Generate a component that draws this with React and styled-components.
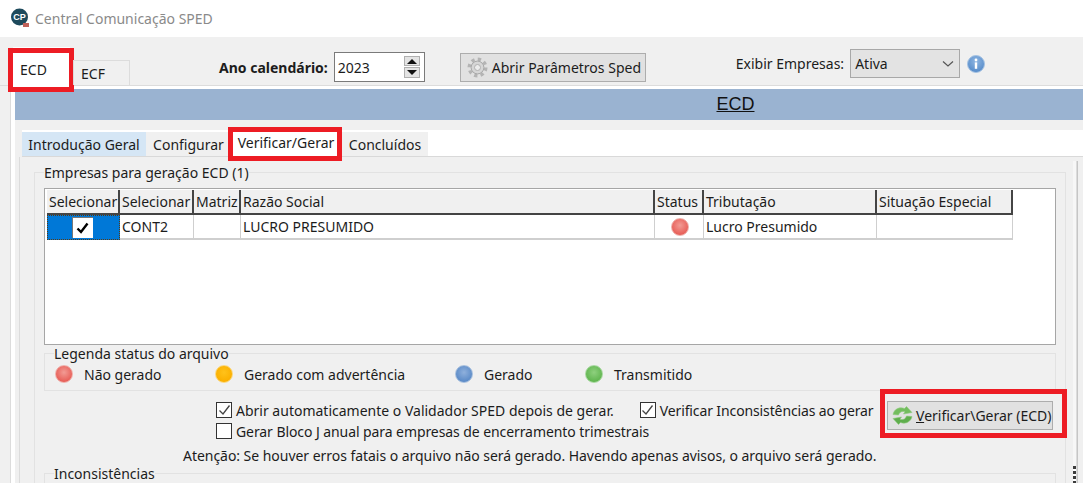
import React from 'react'
import styled, { createGlobalStyle } from 'styled-components'

const GlobalStyle = createGlobalStyle`
  html, body { margin: 0; padding: 0; background: #f0f0f0; }
  body { font-family: "Noto Sans", "Open Sans", sans-serif; font-size: 14px; color: #1c1c1c; }
  * { box-sizing: border-box; }
`

const Win = styled.div`
  width: 1083px;
  height: 483px;
  overflow: hidden;
  background: #f0f0f0;
`

const TitleBar = styled.div`
  height: 37px;
  background: #fff;
  display: flex;
  align-items: center;
  padding: 0 0 1px 10px;
  gap: 5px;
  color: #8a8a8a;
  font-size: 14px;
`

const TopBar = styled.div`
  height: 49px;
  display: flex;
  border-bottom: 1px solid #dcdcdc;
  padding-left: 13px;
`

const OuterTab = styled.div`
  position: relative;
  width: ${p => p.$w}px;
  height: ${p => p.$h}px;
  margin-top: ${p => p.$top}px;
  margin-left: ${p => p.$ml || 0}px;
  padding: ${p => p.$pt || 0}px 0 0 7px;
  background: ${p => (p.$active ? '#fff' : '#f0f0f0')};
  border: ${p => (p.$active ? 'none' : '1px solid #dcdcdc')};
  border-bottom: none;
  display: flex;
  align-items: center;
`

const RedBox = styled.span`
  position: absolute;
  left: ${p => p.$l}px;
  top: ${p => p.$t}px;
  width: ${p => p.$w}px;
  height: ${p => p.$h}px;
  border: 5px solid #ed1c24;
  pointer-events: none;
`

const Label = styled.span`
  font-weight: ${p => (p.$bold ? 700 : 400)};
  white-space: nowrap;
`

const AnoField = styled.div`
  display: flex;
  align-items: center;
  gap: 6px;
  margin-left: 89px;
  margin-top: 15px;
  height: 30px;
`

const Spin = styled.div`
  width: 91px;
  height: 30px;
  background: #fff;
  border: 1px solid #7a7a7a;
  display: flex;
  align-items: center;
  justify-content: space-between;
  padding: 0 4px 0 3px;
`

const SpinArrows = styled.div`
  display: flex;
  flex-direction: column;
  gap: 1px;
`

const SpinBtn = styled.div`
  width: 16px;
  height: ${p => (p.$down ? 11 : 10)}px;
  background: #e4e4e4;
  border: 1px solid #b0b0b0;
  display: flex;
  align-items: center;
  justify-content: center;
  &::before {
    content: '';
    border-left: 5px solid transparent;
    border-right: 5px solid transparent;
    ${p => (p.$down ? 'border-top: 5px solid #111;' : 'border-bottom: 5px solid #111;')}
  }
`

const ToolBtn = styled.div`
  position: relative;
  height: ${p => p.$h}px;
  width: ${p => p.$w}px;
  margin-left: ${p => p.$ml || 0}px;
  margin-top: ${p => p.$mt || 0}px;
  background: #e1e1e1;
  border: 1px solid #adadad;
  display: flex;
  align-items: center;
  gap: ${p => p.$gap}px;
  padding-left: ${p => p.$pl}px;
  white-space: nowrap;
`

const ExibirField = styled.div`
  display: flex;
  align-items: center;
  margin-left: 90px;
  margin-top: 12px;
  height: 29px;
`

const Select = styled.div`
  width: 110px;
  height: 29px;
  margin-left: 6px;
  background: #e3e3e3;
  border: 1px solid #a8a8a8;
  display: flex;
  align-items: center;
  justify-content: space-between;
  padding: 0 5px 0 4px;
`

const Shell = styled.div`
  height: 397px;
  margin-left: 10px;
  border-left: 1px solid #dcdcdc;
  padding-top: 3px;
  padding-left: 4px;
  background: #f0f0f0;
  box-shadow: inset 4px 3px 0 #fff;
`

const Header = styled.div`
  height: 31px;
  background: #9ab3d1;
  display: flex;
  align-items: center;
  justify-content: center;
  font-family: "Liberation Sans", sans-serif;
  font-size: 18px;
  color: #111;
  text-decoration: underline;
  padding-left: 373px;
`

const InnerTabs = styled.div`
  height: 37px;
  padding: 10px 0 0 7px;
  display: flex;
  align-items: flex-end;
`

const TabStrip = styled.div`
  height: 27px;
  flex: 1;
  display: flex;
  align-items: flex-end;
  background: #fff;
  border-bottom: 1px solid #d9d9d9;
`

const InnerTab = styled.div`
  position: relative;
  width: ${p => p.$w}px;
  height: ${p => (p.$active ? 27 : 24)}px;
  margin-left: ${p => p.$ml || 0}px;
  padding: ${p => (p.$active ? 4 : 0)}px 0 0 ${p => p.$pl || 0}px;
  background: ${p => p.$bg};
  display: flex;
  align-items: ${p => (p.$active ? 'flex-start' : 'center')};
  justify-content: center;
  white-space: nowrap;
`

const Panel = styled.div`
  display: flex;
  height: 326px;
  padding-left: 4px;
  overflow: hidden;
`

const PanelBody = styled.div`
  flex: 1;
  border-left: 1px solid #dcdcdc;
  padding: 8px 7px 0 14px;
`

const ScrollRail = styled.div`
  width: 10px;
  margin-top: 4px;
  background: linear-gradient(90deg, #f7f7f7 0 3px, #dcdcdc 3px 4px, #c6c6c6 4px 5px, #f0f0f0 5px);
  position: relative;
  &::after {
    content: '';
    position: absolute;
    left: 0;
    top: 305px;
    width: 3px;
    height: 17px;
    background: repeating-linear-gradient(180deg, #3c3c3c 0 3px, #fff 3px 5px);
  }
`

const Group = styled.fieldset`
  margin: ${p => p.$margin || 0};
  padding: ${p => p.$pad};
  height: ${p => p.$h}px;
  border: 1px solid #e2e2e2;
  min-width: 0;
  & > legend {
    padding: 0;
    margin-left: ${p => p.$lm}px;
    line-height: 15px;
    white-space: nowrap;
  }
`

const GridBox = styled.div`
  height: 157px;
  background: #fff;
  border: 1px solid #a6a6a6;
  padding: 1px 0 0 1px;
`

const Row = styled.div`
  display: grid;
  grid-template-columns: 73px 74px 47px 414px 49px 173px 136px;
  width: 966px;
  margin-left: 1px;
`

const HeadCell = styled.div`
  height: 25px;
  background: #f0f0f0;
  border-right: 2px solid #444;
  border-bottom: 2px solid #444;
  padding-left: 2px;
  display: flex;
  align-items: center;
  white-space: nowrap;
  overflow: hidden;
`

const Cell = styled.div`
  height: 25px;
  border-right: 1px solid #cfcfcf;
  border-bottom: 2px solid #cfcfcf;
  padding-left: 2px;
  display: flex;
  align-items: center;
  justify-content: ${p => (p.$center ? 'center' : 'flex-start')};
  white-space: nowrap;
`

const CheckCell = styled(Cell)`
  background: #0078d7;
  outline: 1px dotted #5a3a10;
  outline-offset: -1px;
  border: none;
  padding: 0 3px 0 0;
  justify-content: center;
`

const Tick = styled.div`
  width: 21px;
  height: 21px;
  background: #fff;
  border-top: 1px solid #777;
  border-left: 1px solid #777;
  display: flex;
  align-items: center;
  justify-content: center;
`

const Dot = styled.span`
  display: block;
  flex: none;
  width: 18px;
  height: 18px;
  border-radius: 50%;
  border: 1px solid ${p => p.$edge};
  background: radial-gradient(circle at 50% 40%, ${p => p.$light} 0%, ${p => p.$color} 70%);
`

const Legend = styled.div`
  display: flex;
  align-items: center;
  padding-left: 10px;
  height: 26px;
`

const LegendItem = styled.div`
  display: flex;
  align-items: center;
  gap: 11px;
  width: ${p => p.$w}px;
  white-space: nowrap;
`

const Options = styled.div`
  display: flex;
  padding: 0 0 0 172px;
  height: 53px;
`

const OptionRows = styled.div`
  width: 666px;
  padding-top: 11px;
  display: flex;
  flex-direction: column;
  gap: 5px;
`

const OptionRow = styled.div`
  display: flex;
  align-items: center;
  height: 16px;
`

const CheckOpt = styled.div`
  display: flex;
  align-items: center;
  gap: 4px;
  white-space: nowrap;
  margin-left: ${p => p.$ml || 0}px;
  letter-spacing: ${p => p.$track || 0}px;
`

const Box = styled.span`
  display: flex;
  width: 16px;
  height: 16px;
  background: #fff;
  border: 1px solid #333;
  align-items: center;
  justify-content: center;
`

const Notice = styled.div`
  padding-left: 139px;
  height: 22px;
  display: flex;
  align-items: center;
  white-space: nowrap;
  letter-spacing: -0.04px;
`

const CheckMark = ({ heavy }) => (
  <svg width="13" height="12" viewBox="0 0 13 12">
    <path d="M1.5 6.5 L5 10 L11.5 1.5" fill="none" stroke={heavy ? '#000' : '#444'} strokeWidth={heavy ? 2.4 : 1.3} />
  </svg>
)

const Logo = () => (
  <svg width="20" height="20" viewBox="0 0 20 20">
    <circle cx="9.5" cy="9" r="8.5" fill="#1d4a5c" />
    <text x="9.5" y="12" textAnchor="middle" fontSize="9" fontWeight="700" fill="#fff" fontFamily="Liberation Sans, sans-serif">CP</text>
    <rect x="13" y="15" width="6" height="4" fill="#c0625a" />
  </svg>
)

const GearIcon = () => (
  <svg width="21" height="21" viewBox="0 0 21 21">
    <circle cx="10.5" cy="10.5" r="8.3" fill="none" stroke="#b4b4b4" strokeWidth="3.4" strokeDasharray="3.3 3.22" />
    <circle cx="10.5" cy="10.5" r="6.4" fill="#d6d6d6" stroke="#a8a8a8" strokeWidth="1" />
    <circle cx="10.5" cy="10.5" r="3" fill="#ececec" stroke="#b0b0b0" strokeWidth="1" />
  </svg>
)

const InfoIcon = () => (
  <svg width="18" height="18" viewBox="0 0 18 18" style={{ marginLeft: 7 }}>
    <defs>
      <radialGradient id="infoFill" cx="50%" cy="35%" r="70%">
        <stop offset="0%" stopColor="#8fb6e2" />
        <stop offset="100%" stopColor="#4f86c6" />
      </radialGradient>
    </defs>
    <circle cx="9" cy="9" r="8.5" fill="url(#infoFill)" stroke="#a6c3e3" />
    <circle cx="9" cy="5" r="1.4" fill="#fff" />
    <rect x="7.8" y="7.4" width="2.4" height="6.4" fill="#fff" />
  </svg>
)

const SyncIcon = () => (
  <svg width="21" height="19" viewBox="0 0 21 19">
    <path d="M1 8.5 C2 3.5 7 0.5 12.5 2.5 L14.5 0.5 L20 6.5 L11.5 8 L13 5.8 C10 4.8 7.5 5.8 6.5 9 Z" fill="#73bd5e" stroke="#8fcb7e" strokeWidth="0.6" />
    <path d="M20 10.5 C19 15.5 14 18.5 8.5 16.5 L6.5 18.5 L1 12.5 L9.5 11 L8 13.2 C11 14.2 13.5 13.2 14.5 10 Z" fill="#5fae4d" stroke="#8fcb7e" strokeWidth="0.6" />
  </svg>
)

const statuses = [
  { label: 'Não gerado', w: 160, color: '#e8615a', light: '#f29b94', edge: '#efb0ab' },
  { label: 'Gerado com advertência', w: 240, color: '#fbb000', light: '#ffc21a', edge: '#fbd77e' },
  { label: 'Gerado', w: 130, color: '#5d8cc8', light: '#8fb0dc', edge: '#a8c0de' },
  { label: 'Transmitido', w: 130, color: '#62b651', light: '#8ed07e', edge: '#a8d8a0' },
]

const headers = ['Selecionar', 'Selecionar', 'Matriz', 'Razão Social', 'Status', 'Tributação', 'Situação Especial']

export default function App() {
  return (
    <Win>
      <GlobalStyle />
      <TitleBar>
        <Logo />
        <span>Central Comunicação SPED</span>
      </TitleBar>
      <TopBar>
        <OuterTab $active $w={57} $h={39} $top={10} $pt={6}>
          ECD
          <RedBox $l={-5} $t={1} $w={66} $h={44} />
        </OuterTab>
        <OuterTab $w={57} $h={25} $top={23} $ml={3}>ECF</OuterTab>
        <AnoField>
          <Label $bold>Ano calendário:</Label>
          <Spin>
            2023
            <SpinArrows>
              <SpinBtn />
              <SpinBtn $down />
            </SpinArrows>
          </Spin>
        </AnoField>
        <ToolBtn $w={186} $h={29} $ml={35} $mt={16} $gap={4} $pl={6}>
          <GearIcon />
          Abrir Parâmetros Sped
        </ToolBtn>
        <ExibirField>
          <Label>Exibir Empresas:</Label>
          <Select>
            Ativa
            <svg width="12" height="8" viewBox="0 0 12 8">
              <path d="M1 1.5 L6 6 L11 1.5" fill="none" stroke="#555" strokeWidth="1.2" />
            </svg>
          </Select>
          <InfoIcon />
        </ExibirField>
      </TopBar>
      <Shell>
        <Header>ECD</Header>
        <InnerTabs>
          <TabStrip>
            <InnerTab $w={124} $bg="#d5e6f5">Introdução Geral</InnerTab>
            <InnerTab $w={82} $pl={3} $bg="#f0f0f0">Configurar</InnerTab>
            <InnerTab $active $w={106} $ml={4} $pl={2} $bg="#fff">
              Verificar/Gerar
              <RedBox $l={-4} $t={-2} $w={114} $h={34} />
            </InnerTab>
            <InnerTab $w={86} $ml={4} $bg="#f0f0f0">Concluídos</InnerTab>
          </TabStrip>
        </InnerTabs>
        <Panel>
          <PanelBody>
            <Group $h={340} $pad="8px 9px 0" $lm={0}>
              <legend>Empresas para geração ECD (1)</legend>
              <GridBox>
                <Row>
                  {headers.map((h, i) => <HeadCell key={i}>{h}</HeadCell>)}
                </Row>
                <Row>
                  <CheckCell>
                    <Tick><CheckMark heavy /></Tick>
                  </CheckCell>
                  <Cell>CONT2</Cell>
                  <Cell />
                  <Cell>LUCRO PRESUMIDO</Cell>
                  <Cell $center><Dot $color="#e8615a" $light="#f29b94" $edge="#efb0ab" /></Cell>
                  <Cell>Lucro Presumido</Cell>
                  <Cell />
                </Row>
              </GridBox>
              <Group $h={45} $pad="0" $lm={9} $margin="1px 0 0">
                <legend>Legenda status do arquivo</legend>
                <Legend>
                  {statuses.map(s => (
                    <LegendItem key={s.label} $w={s.w}>
                      <Dot $color={s.color} $light={s.light} $edge={s.edge} />
                      {s.label}
                    </LegendItem>
                  ))}
                </Legend>
              </Group>
              <Options>
                <OptionRows>
                  <OptionRow>
                    <CheckOpt><Box><CheckMark /></Box>Abrir automaticamente o Validador SPED depois de gerar.</CheckOpt>
                    <CheckOpt $ml={26} $track={-0.12}><Box><CheckMark /></Box>Verificar Inconsistências ao gerar</CheckOpt>
                  </OptionRow>
                  <OptionRow>
                    <CheckOpt $track={-0.08}><Box />Gerar Bloco J anual para empresas de encerramento trimestrais</CheckOpt>
                  </OptionRow>
                </OptionRows>
                <ToolBtn $w={166} $h={29} $ml={5} $mt={10} $gap={3} $pl={4}>
                  <SyncIcon />
                  <span><u>V</u>erificar\Gerar (ECD)</span>
                  <RedBox $l={-8} $t={-13} $w={187} $h={49} />
                </ToolBtn>
              </Options>
              <Notice>Atenção: Se houver erros fatais o arquivo não será gerado. Havendo apenas avisos, o arquivo será gerado.</Notice>
              <Group $h={40} $pad="0" $lm={9}>
                <legend>Inconsistências</legend>
              </Group>
            </Group>
          </PanelBody>
          <ScrollRail />
        </Panel>
      </Shell>
    </Win>
  )
}
